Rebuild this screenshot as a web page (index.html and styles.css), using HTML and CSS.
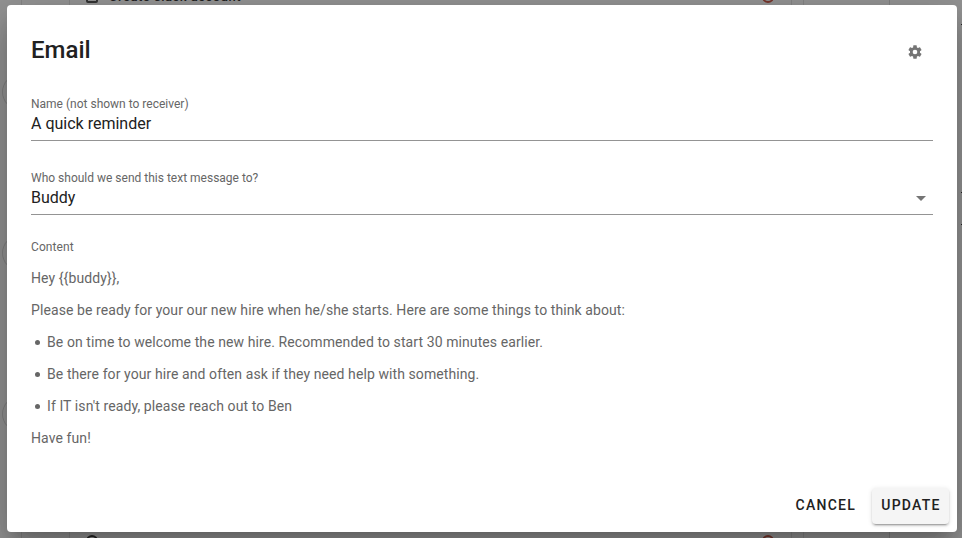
FILE: index.html
```html
<!DOCTYPE html>
<html lang="en">
<head>
<meta charset="utf-8">
<title>Email</title>
<link rel="stylesheet" href="styles.css">
</head>
<body>
<div class="page">
  <div class="timeline"><i class="dot"></i><i class="dot"></i><i class="dot"></i></div>
  <div class="gutter"></div>
  <div class="tasks">
    <div class="task"><i class="box"></i><span>Create slack account</span><i class="remove"></i></div>
    <div class="task task-last"><i class="person"></i><i class="remove"></i></div>
  </div>
  <div class="gap"></div>
  <div class="column"></div>
  <div class="side"><i class="tick tick-a"></i><i class="tick tick-b"></i><i class="tick tick-c"></i></div>
</div>
<div class="overlay">
  <main class="dialog">
    <header class="head">
      <h1>Email</h1>
      <svg class="gear" viewBox="0 0 24 24"><path d="M12 15.5A3.5 3.5 0 0 1 8.5 12 3.5 3.5 0 0 1 12 8.5a3.5 3.5 0 0 1 3.5 3.5 3.5 3.5 0 0 1-3.5 3.5m7.430-2.530c.04-.32.070-.64.070-.97s-.03-.66-.07-1l2.110-1.630c.19-.15.240-.42.120-.64l-2-3.460c-.12-.22-.39-.31-.61-.22l-2.490 1c-.52-.39-1.060-.73-1.690-.98l-.37-2.650A.506.506 0 0 0 14 2h-4c-.25 0-.46.18-.5.420l-.37 2.650c-.63.250-1.170.590-1.690.980l-2.490-1c-.22-.09-.49 0-.61.220l-2 3.460c-.13.220-.07.490.120.640L4.570 11c-.04.340-.07.670-.07 1s.03.650.070.970l-2.110 1.660c-.19.150-.25.420-.12.640l2 3.460c.12.220.39.300.61.220l2.490-1.010c.52.400 1.060.740 1.690.990l.37 2.650c.04.240.25.420.5.420h4c.25 0 .46-.18.5-.42l.37-2.650c.63-.26 1.170-.59 1.690-.99l2.490 1.010c.22.080.49 0 .61-.22l2-3.460c.12-.22.070-.49-.12-.64z"/></svg>
    </header>
    <section class="field">
      <label>Name (not shown to receiver)</label>
      <div class="value">A quick reminder</div>
    </section>
    <section class="field">
      <label>Who should we send this text message to?</label>
      <div class="value">Buddy<svg class="caret" viewBox="0 0 10 5"><path d="M0 0h10L5 5z"/></svg></div>
    </section>
    <section class="content">
      <label>Content</label>
      <p>Hey {{buddy}},</p>
      <p>Please be ready for your our new hire when he/she starts. Here are some things to think about:</p>
      <ul>
        <li>Be on time to welcome the new hire. Recommended to start 30 minutes earlier.</li>
        <li>Be there for your hire and often ask if they need help with something.</li>
        <li>If IT isn't ready, please reach out to Ben</li>
      </ul>
      <p>Have fun!</p>
    </section>
    <footer class="actions">
      <button class="btn">CANCEL</button>
      <button class="btn raised">UPDATE</button>
    </footer>
  </main>
</div>
</body>
</html>
```
FILE: styles.css
```css
* { box-sizing: border-box; }
body {
  margin: 0;
  height: 538px;
  overflow: hidden;
  background: #949494;
  font-family: Roboto, sans-serif;
  color: #212121;
}
.page {
  display: grid;
  grid-template-columns: 21px 48px 722px 12px 86px 1fr;
  height: 538px;
}
.timeline { padding-top: 74px; overflow: hidden; }
.dot {
  display: block;
  width: 36px;
  height: 36px;
  margin: 0 0 125px 2px;
  border: 1px solid #808080;
  border-radius: 50%;
}
.gutter, .tasks, .gap, .column { border-left: 1px solid #858585; }
.side { border-left: 1px solid #808080; position: relative; }
.tasks {
  display: flex;
  flex-direction: column;
  justify-content: space-between;
}
.task {
  display: flex;
  align-items: center;
  height: 16px;
  padding: 0 17px 0 16px;
  font-size: 13px;
  font-weight: 500;
  line-height: 16px;
}
.task:first-child { margin-top: -11px; }
.task .box {
  width: 12px;
  height: 12px;
  border: 2px solid #333;
  border-radius: 2px;
}
.task span { margin-left: 11px; letter-spacing: .5px; }
.remove {
  width: 12px;
  height: 12px;
  margin-left: auto;
  border: 2px solid #78352c;
  border-radius: 50%;
}
.task-last { height: 3px; overflow: hidden; align-items: flex-start; }
.person {
  width: 12px;
  height: 12px;
  border: 2px solid #222;
  border-radius: 50%;
}
.tick { position: absolute; right: 0; width: 1px; height: 1px; background: #222; }
.tick-a { top: 24px; }
.tick-b { top: 192px; }
.tick-c { top: 224px; }
.overlay {
  position: absolute;
  inset: 0;
  padding: 5px 5px 6px 7px;
  display: flex;
}
.dialog {
  flex: 1;
  display: flex;
  flex-direction: column;
  padding: 0 24px;
  background: #fff;
  border-radius: 4px;
  box-shadow: 0 11px 15px -7px rgba(0,0,0,.2), 0 24px 38px 3px rgba(0,0,0,.14), 0 9px 46px 8px rgba(0,0,0,.12);
}
.head {
  display: flex;
  justify-content: space-between;
  padding: 29px 10px 0 0;
  height: 92px;
}
h1 { margin: 0; font-size: 24px; line-height: 32px; font-weight: 500; }
.gear { width: 16px; height: 16px; margin-top: 10px; fill: #757575; }
label {
  display: block;
  font-size: 12px;
  line-height: 14px;
  color: #666;
}
.field { height: 74px; }
.value {
  display: flex;
  justify-content: space-between;
  align-items: center;
  height: 30px;
  padding: 0 7px 3px 0;
  border-bottom: 1px solid #949494;
  font-size: 16px;
  line-height: 24px;
}
.caret { width: 10px; height: 5px; fill: #757575; }
.content {
  margin-top: -5px;
  font-size: 14px;
  line-height: 22px;
  letter-spacing: .09px;
  color: #666;
}
.content label { margin-bottom: 13px; }
.content p, .content li { margin: 0 0 10px; }
.content ul { margin: 0; padding: 0 0 0 4px; list-style: none; }
.content li { display: flex; align-items: center; gap: 7px; }
.content li::before {
  content: "";
  width: 5px;
  height: 5px;
  margin-top: 1px;
  border-radius: 50%;
  background: #666;
}
.actions {
  display: flex;
  justify-content: flex-end;
  gap: 8px;
  margin: auto -16px 8px 0;
}
.btn {
  height: 36px;
  padding: 0 8px 2px 9px;
  border: 0;
  border-radius: 4px;
  background: none;
  color: #212121;
  font: 500 14px Roboto, sans-serif;
  letter-spacing: 1.25px;
}
.raised {
  width: 77px;
  background: #f5f5f5;
  box-shadow: 0 3px 1px -2px rgba(0,0,0,.2), 0 2px 2px rgba(0,0,0,.14), 0 1px 5px rgba(0,0,0,.12);
}
```
